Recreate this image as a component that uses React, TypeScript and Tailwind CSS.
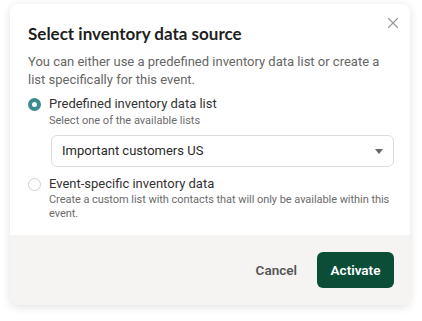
import { X } from "lucide-react"

export default function App() {
  return (
    <div className="min-h-[321px] bg-white pl-[10px] pt-[4px] font-['Roboto',sans-serif]">
      <div className="w-[400px] rounded-lg bg-white shadow-[0_2px_10px_rgba(0,0,0,0.12)] overflow-hidden">
        <div className="relative pl-[18px] pr-[16px] pt-[19px] pb-[14px]">
          <button className="absolute right-[8px] top-[10px] text-[#9a9a9a]">
            <X className="w-[18px] h-[18px]" strokeWidth={1.6} />
          </button>
          <h2 className="font-['Lato',sans-serif] text-[17px] leading-[22px] font-bold text-[#1f1f1f]">
            Select inventory data source
          </h2>
          <p className="mt-[8px] pr-[2px] text-[13px] leading-[18px] text-[#666666]">
            You can either use a predefined inventory data list or create a list specifically for
            this event.
          </p>

          {/* Predefined option */}
          <div className="mt-[6px] flex items-start gap-[8px]">
            <span className="mt-[3px] w-[13px] h-[13px] rounded-full border-[4px] border-[#3c8b90] bg-white flex-shrink-0" />
            <div className="flex-1">
              <div className="text-[13px] leading-[18px] text-[#333333]">
                Predefined inventory data list
              </div>
              <div className="text-[11px] leading-[16px] text-[#6b6b6b]">
                Select one of the available lists
              </div>
              <div className="mt-[6px] ml-[2px] h-[32px] rounded-md border border-[#dcdcdc] flex items-center justify-between pl-[10px] pr-[10px]">
                <span className="text-[13px] text-[#2a2a2a]">Important customers US</span>
                <svg width="8" height="5" viewBox="0 0 8 5" className="text-[#666]">
                  <path d="M0 0h8L4 5z" fill="currentColor" />
                </svg>
              </div>
            </div>
          </div>

          {/* Event-specific option */}
          <div className="mt-[8px] flex items-start gap-[8px]">
            <span className="mt-[3px] w-[13px] h-[13px] rounded-full border border-[#cfcfcf] bg-white flex-shrink-0" />
            <div className="flex-1">
              <div className="text-[13px] leading-[18px] text-[#333333]">
                Event-specific inventory data
              </div>
              <div className="text-[11px] leading-[14px] tracking-[-0.05px] text-[#6b6b6b]">
                Create a custom list with contacts that will only be available within this event.
              </div>
            </div>
          </div>
        </div>

        <div className="h-[70px] bg-[#f5f4f2] flex items-center justify-end gap-[20px] pr-[16px]">
          <button className="text-[13.5px] font-semibold text-[#555555]">Cancel</button>
          <button className="h-[36px] w-[77px] rounded-md bg-[#0b4d36] text-[13.5px] font-semibold text-white">
            Activate
          </button>
        </div>
      </div>
    </div>
  )
}
